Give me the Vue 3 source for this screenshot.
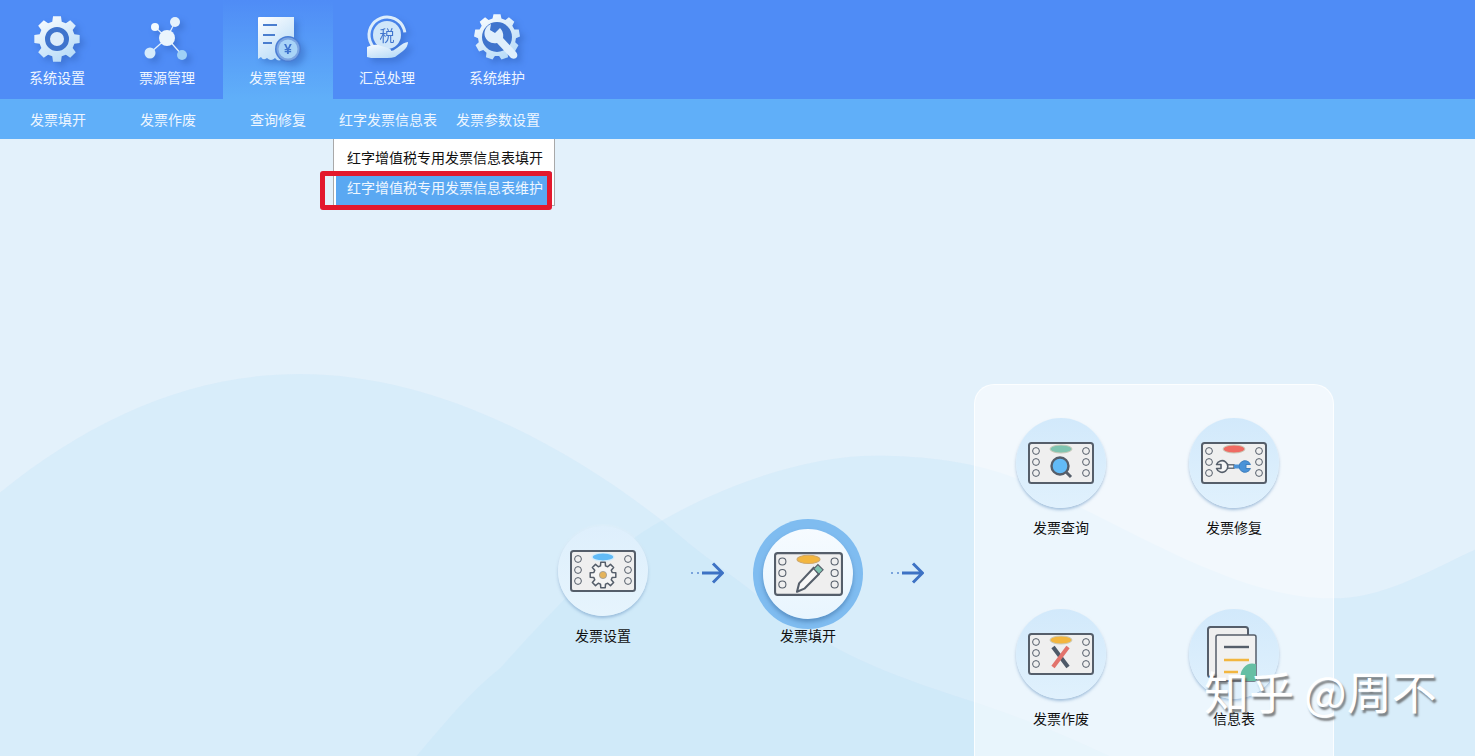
<script setup>
const topMenu = [
  { key: 'gear', label: '系统设置' },
  { key: 'net', label: '票源管理' },
  { key: 'receipt', label: '发票管理', active: true },
  { key: 'tax', label: '汇总处理' },
  { key: 'tool', label: '系统维护' }
]
const subMenu = ['发票填开', '发票作废', '查询修复', '红字发票信息表', '发票参数设置']
const panelItems = [
  { glyph: 'search', oval: '#7fc4b0', label: '发票查询' },
  { glyph: 'wrench', oval: '#ef6a62', label: '发票修复' },
  { glyph: 'cross', oval: '#f3b63f', label: '发票作废' },
  { glyph: 'docs', label: '信息表' }
]
const holes = [8, 58].flatMap(x => [9, 20, 31].map(y => ({ x, y })))

// 齿轮轮廓
const gearPath = (cx, cy, outer, inner, teeth) => {
  const step = (Math.PI * 2) / teeth
  let d = ''
  for (let i = 0; i < teeth; i++) {
    const a = i * step - Math.PI / 2
    const pts = [
      [inner, a - step * 0.34],
      [outer, a - step * 0.22],
      [outer, a + step * 0.22],
      [inner, a + step * 0.34]
    ]
    pts.forEach(([r, t], n) => {
      const cmd = i === 0 && n === 0 ? 'M' : 'L'
      d += `${cmd}${(cx + r * Math.cos(t)).toFixed(2)} ${(cy + r * Math.sin(t)).toFixed(2)} `
    })
  }
  return d + 'Z'
}
</script>

<template>
  <div class="page">
    <header class="top-bar">
      <div v-for="item in topMenu" :key="item.key" class="top-item" :class="{ active: item.active }">
        <svg class="top-icon" viewBox="0 0 56 56" width="56" height="56">
          <defs>
            <linearGradient :id="'g-' + item.key" x1="0" y1="0" x2="0.6" y2="1">
              <stop offset="0" stop-color="#ffffff" />
              <stop offset="1" stop-color="#b9dcf8" />
            </linearGradient>
          </defs>
          <g v-if="item.key === 'gear'">
            <path :d="gearPath(28, 28, 23, 18, 8)" :fill="'url(#g-gear)'" />
            <circle cx="28" cy="28" r="9.5" fill="#dcecfb" stroke="#3f74cd" stroke-width="5" />
          </g>
          <g v-else-if="item.key === 'net'" stroke="#e6f3fd" stroke-width="1.2">
            <line x1="28" y1="27" x2="36" y2="11" />
            <line x1="28" y1="27" x2="16" y2="16" />
            <line x1="28" y1="27" x2="11" y2="42" />
            <line x1="28" y1="27" x2="43" y2="44" />
            <circle cx="28" cy="27" r="8" fill="#eaf5fd" stroke="none" />
            <circle cx="36" cy="11" r="5" fill="#e4f2fc" stroke="none" />
            <circle cx="16" cy="16" r="4" fill="#f4fafe" stroke="none" />
            <circle cx="11" cy="42" r="5.5" fill="#d6ebfb" stroke="none" />
            <circle cx="43" cy="44" r="5" fill="#9fd0f6" stroke="none" />
          </g>
          <g v-else-if="item.key === 'receipt'">
            <path d="M9 7 Q9 6 10 6 H45 V44 L41 46 Q38 51 34 47 Q30 52 26 47 Q22 51 18 47 Q14 50 12 46 L9 48 Z" fill="url(#g-receipt)" />
            <path d="M14 14 H28 M14 24 H26 M14 32 H23" stroke="#4a7ecf" stroke-width="2" fill="none" />
            <circle cx="39" cy="38" r="13" fill="#4a7ed4" />
            <circle cx="39" cy="38" r="11.5" fill="#dbeefc" fill-opacity="0.35" />
            <circle cx="39" cy="38" r="9.5" fill="#a9d4f7" />
            <text x="39" y="43" text-anchor="middle" font-size="14" font-weight="700" fill="#3f74cd" font-family="Liberation Sans, sans-serif">¥</text>
          </g>
          <g v-else-if="item.key === 'tax'">
            <circle cx="28" cy="24" r="18" fill="none" stroke="#dcedfb" stroke-width="3" stroke-dasharray="88 25" transform="rotate(70 28 24)" />
            <circle cx="28" cy="24" r="14" fill="#cfe6fa" />
            <text x="28" y="30" text-anchor="middle" font-size="15" fill="#3f74cd" font-family="Noto Sans CJK SC, sans-serif">税</text>
            <path d="M8 36 Q16 32 22 35 L29 37 Q33 38 32 41 L38 37 Q45 31 49 31 Q49 36 44 40 L36 46 Q33 47 28 47 H12 L8 46 Z" fill="url(#g-tax)" />
          </g>
          <g v-else transform="translate(1 0)">
            <path :d="gearPath(27, 26, 23, 19, 9)" fill="url(#g-tool)" />
            <circle cx="27" cy="26" r="15" fill="#3f74cd" />
            <path d="M21 13 A10 10 0 0 0 18 30 Q22 33 27 32 L41 47 Q45 49 47 46 Q48 43 46 41 L33 27 Q34 21 30 17 L25 22 L20 19 Z" fill="#e0effc" />
          </g>
        </svg>
        <span class="top-label">{{ item.label }}</span>
      </div>
    </header>

    <nav class="sub-bar">
      <span v-for="s in subMenu" :key="s" class="sub-item">{{ s }}</span>
    </nav>

    <main class="main">
      <svg class="waves" viewBox="0 0 1475 617" preserveAspectRatio="none">
        <path d="M0 328 C90 260 190 218 300 218 C430 218 560 280 662 354 C700 385 725 400 750 418 C830 480 900 500 980 524 C1080 555 1150 590 1200 617 H0 Z" fill="#bee1f8" fill-opacity="0.27" />
        <path d="M375 617 C430 560 460 520 500 491 C560 430 610 380 662 354 C730 318 810 294 875 294 C930 294 980 300 1030 320 C1130 360 1240 430 1340 426 C1390 424 1440 395 1475 381 V617 Z" fill="#bee1f8" fill-opacity="0.27" />
      </svg>

      <ul class="dropdown">
        <li>红字增值税专用发票信息表填开</li>
        <li class="hover">红字增值税专用发票信息表维护</li>
      </ul>
      <div class="red-mark"></div>

      <section class="flow">
        <div class="node first">
          <div class="disc">
            <svg class="card" viewBox="0 0 66 42" width="66" height="42">
              <rect x="1" y="1" width="64" height="40" rx="2.5" fill="#efefef" stroke="#555e6a" stroke-width="2" />
              <circle v-for="h in holes" :key="h.x + '-' + h.y" :cx="h.x" :cy="h.y" r="3.4" fill="none" stroke="#555e6a" stroke-width="1" />
              <ellipse cx="33" cy="7" rx="11" ry="4" fill="#62bbf7" stroke="#d4ecfa" stroke-width="1.2" />
              <path :d="gearPath(33, 25, 13, 9.5, 8)" fill="#f5f5f5" stroke="#555e6a" stroke-width="1.5" stroke-linejoin="round" />
              <circle cx="33" cy="25" r="3.6" fill="#e5b45b" stroke="#999" stroke-width="0.8" />
            </svg>
          </div>
          <span class="label">发票设置</span>
        </div>

        <svg class="arrow" viewBox="0 0 34 24" width="34" height="24">
          <path d="M1 12 H3 M7 12 H9" stroke="#7aa4dc" stroke-width="2" fill="none" />
          <path d="M12 12 H32 M23 2.5 L32.5 12 L23 21.5" stroke="#3d72c4" stroke-width="3" fill="none" />
        </svg>

        <div class="node current">
          <div class="ring">
            <div class="disc light">
              <svg class="card" viewBox="0 0 66 42" width="69" height="44">
                <rect x="1" y="1" width="64" height="40" rx="2.5" fill="#efefef" stroke="#555e6a" stroke-width="2" />
                <circle v-for="h in holes" :key="h.x + '-' + h.y" :cx="h.x" :cy="h.y" r="3.4" fill="none" stroke="#555e6a" stroke-width="1" />
                <ellipse cx="33" cy="7" rx="11" ry="4" fill="#f3b63f" stroke="#cfa86a" stroke-width="1" />
                <path d="M22 38 L24 30 L38 15 L43 21 L29 35 Z" fill="#f7f7f7" stroke="#555e6a" stroke-width="2" stroke-linejoin="round" />
                <path d="M38 16 L42 12 L47 17 L43 21 Z" fill="#7fc4b0" stroke="#555e6a" stroke-width="1" />
              </svg>
            </div>
          </div>
          <span class="label">发票填开</span>
        </div>

        <svg class="arrow second" viewBox="0 0 34 24" width="34" height="24">
          <path d="M1 12 H3 M7 12 H9" stroke="#7aa4dc" stroke-width="2" fill="none" />
          <path d="M12 12 H32 M23 2.5 L32.5 12 L23 21.5" stroke="#3d72c4" stroke-width="3" fill="none" />
        </svg>

        <div class="panel">
          <div v-for="p in panelItems" :key="p.label" class="node">
            <div class="disc blue">
              <svg v-if="p.glyph !== 'docs'" class="card" viewBox="0 0 66 42" width="66" height="42">
                <rect x="1" y="1" width="64" height="40" rx="2.5" fill="#efefef" stroke="#555e6a" stroke-width="2" />
                <circle v-for="h in holes" :key="h.x + '-' + h.y" :cx="h.x" :cy="h.y" r="3.4" fill="none" stroke="#555e6a" stroke-width="1" />
                <ellipse cx="33" cy="7" rx="11" ry="4" :fill="p.oval" stroke="#c9c9b8" stroke-width="1" />
                <g v-if="p.glyph === 'search'">
                  <circle cx="32" cy="24" r="8.5" fill="#62bbf7" stroke="#555e6a" stroke-width="2.4" />
                  <path d="M38 30 L43 35" stroke="#555e6a" stroke-width="3" />
                </g>
                <g v-else-if="p.glyph === 'wrench'">
                  <rect x="25" y="22.8" width="8" height="3.4" fill="#f7f7f7" stroke="#555e6a" stroke-width="1.3" />
                  <rect x="33" y="22.5" width="8" height="4" fill="#4b93d8" />
                  <path d="M15.56 22.5 L20 22.5 L20 26.5 L15.56 26.5 A5.8 5.8 0 1 0 15.56 22.5 Z" fill="#f7f7f7" stroke="#555e6a" stroke-width="1.6" stroke-linejoin="round" />
                  <path d="M49.44 22.5 L45 22.5 L45 26.5 L49.44 26.5 A5.8 5.8 0 1 1 49.44 22.5 Z" fill="#4b93d8" stroke="#3f7fbe" stroke-width="1" stroke-linejoin="round" />
                </g>
                <g v-else>
                  <path d="M25 14 L40 34" stroke="#4d5968" stroke-width="4" />
                  <path d="M40 14 L25 34" stroke="#e2736c" stroke-width="4" />
                </g>
              </svg>
              <svg v-else class="docs" viewBox="0 0 66 60" width="66" height="60">
                <rect x="9" y="2" width="40" height="50" rx="2.5" fill="#efefef" stroke="#555e6a" stroke-width="2" />
                <rect x="17" y="10" width="40" height="46" rx="2" fill="#f1f1f1" stroke="#555e6a" stroke-width="1.5" />
                <path d="M25 22 H50" stroke="#555e6a" stroke-width="2.4" />
                <path d="M25 35 H50 M25 47 H39" stroke="#f3b63f" stroke-width="2.4" />
                <path d="M57 39 A12 12 0 0 0 43 56 H57 Z" fill="#66bfa4" />
              </svg>
            </div>
            <span class="label">{{ p.label }}</span>
          </div>
        </div>
      </section>

      <div class="watermark">知乎 @周不</div>
    </main>
  </div>
</template>

<style>
html,
body {
  margin: 0;
  overflow: hidden;
}
</style>

<style scoped>
.page {
  height: 756px;
  display: flex;
  flex-direction: column;
  overflow: hidden;
  font-family: "Noto Sans CJK SC", "Liberation Sans", sans-serif;
  font-size: 14px;
}

.top-bar {
  height: 99px;
  flex: none;
  display: flex;
  padding-left: 3px;
  background: #4f8cf6;
}

.top-item {
  width: 110px;
  height: 99px;
  display: flex;
  flex-direction: column;
  align-items: center;
  color: #eef6ff;
}

.top-item.active {
  background: linear-gradient(#4f8cf6, #60aff9);
}

.top-icon {
  margin: 11px 2px 0 0;
  filter: drop-shadow(4px 4px 3px rgba(40, 85, 170, 0.4));
}

.top-label {
  margin-right: 2px;
  line-height: 20px;
}

.sub-bar {
  height: 40px;
  flex: none;
  display: flex;
  padding-left: 3px;
  background: #60aff9;
  color: #eef6ff;
}

.sub-item {
  width: 110px;
  line-height: 41px;
  text-align: center;
  white-space: nowrap;
}

.main {
  position: relative;
  flex: 1;
  padding-left: 558px;
  background: #e3f1fb;
}

.waves {
  position: absolute;
  left: 0;
  top: 0;
  width: 100%;
  height: 100%;
}

.dropdown {
  position: absolute;
  left: 333px;
  top: 0;
  width: 218px;
  height: 63px;
  margin: 0;
  padding: 3px 2px 0 0;
  box-sizing: content-box;
  list-style: none;
  background: #fff;
  border: 1px solid #a9a9a9;
  border-top: 0;
  z-index: 2;
}

.dropdown li {
  height: 30px;
  line-height: 30px;
  margin-left: 2px;
  padding-left: 11px;
  color: #111;
  white-space: nowrap;
}

.dropdown li.hover {
  height: 33px;
  background: #5aa8f2;
  color: #eef6ff;
}

.red-mark {
  position: absolute;
  left: 320px;
  top: 32px;
  width: 232px;
  height: 39px;
  box-sizing: border-box;
  border: 5px solid #e3182d;
  border-radius: 3px;
  z-index: 3;
}

.flow {
  position: relative;
  display: flex;
  align-items: flex-start;
}

.node {
  display: flex;
  flex-direction: column;
  align-items: center;
}

.node.first {
  margin-top: 387px;
  width: 90px;
}

.node.current {
  margin-top: 380px;
  width: 110px;
}

.disc {
  width: 90px;
  height: 90px;
  flex: none;
  border-radius: 50%;
  display: flex;
  align-items: center;
  justify-content: center;
  background: linear-gradient(#deeffc, #e6f4fd);
  box-shadow: 0 2px 3px rgba(90, 140, 190, 0.5), 0 0 3px rgba(255, 255, 255, 0.6);
}

.disc.light {
  background: linear-gradient(#f6fbff, #e8f5fe);
  box-shadow: 0 3px 4px rgba(60, 110, 160, 0.55);
}

.disc.blue {
  position: relative;
  background: linear-gradient(#d2e9fb, #e0f1fd);
}

.docs {
  position: absolute;
  left: 10px;
  top: 16px;
}

.ring {
  width: 110px;
  height: 110px;
  border-radius: 50%;
  display: flex;
  align-items: center;
  justify-content: center;
  background: #7fbcf0;
}

.label {
  margin-top: 9px;
  line-height: 20px;
  color: #111;
  white-space: nowrap;
}

.node.current .label {
  margin-top: -4px;
}

.arrow {
  flex: none;
  margin: 422px 29px 0 42px;
}

.arrow.second {
  margin: 422px 50px 0 27px;
}

.panel {
  width: 360px;
  height: 420px;
  flex: none;
  box-sizing: border-box;
  margin-top: 245px;
  padding: 33px 0 0 0;
  display: grid;
  grid-template-columns: 172px 174px;
  grid-auto-rows: 110px;
  row-gap: 81px;
  border: 1px solid rgba(255, 255, 255, 0.75);
  border-radius: 20px;
  background: rgba(255, 255, 255, 0.52);
}

.watermark {
  position: absolute;
  left: 1204px;
  top: 522px;
  font-size: 45px;
  line-height: 60px;
  color: #fff;
  white-space: nowrap;
  text-shadow: 2px 3px 2px rgba(80, 80, 80, 0.7);
  z-index: 4;
}
</style>
